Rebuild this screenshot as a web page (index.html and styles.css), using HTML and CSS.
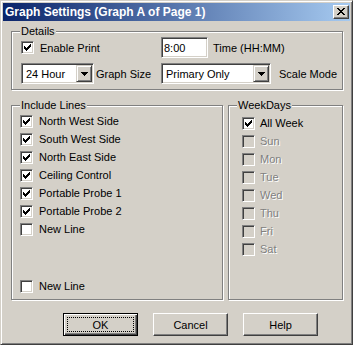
FILE: index.html
```html
<!DOCTYPE html>
<html lang="en">
<head>
  <meta charset="UTF-8" />
  <title>Graph Settings</title>
  <link rel="stylesheet" href="styles.css">
</head>
<body>

  <div class="window">
    <div class="titlebar">
      <span class="title">Graph Settings (Graph A of Page 1)</span>
      <span class="close-btn">
        <svg width="8" height="7" viewBox="0 0 8 7"><path d="M0 0h2v1h-2z M6 0h2v1h-2z M1 1h2v1h-2z M5 1h2v1h-2z M2 2h4v1h-4z M3 3h2v1h-2z M2 4h4v1h-4z M1 5h2v1h-2z M5 5h2v1h-2z M0 6h2v1h-2z M6 6h2v1h-2z" fill="#000"/></svg>
      </span>
    </div>

    <div class="dialog">
      <div class="group details">
        <span class="group-label">Details</span>
        <div class="details-row">
          <div class="details-first check">
            <span class="box"><svg width="11" height="11" viewBox="1 1 11 11"><path d="M9 3h1v1h-1z M8 4h2v1h-2z M3 5h1v1h-1z M7 5h3v1h-3z M3 6h2v1h-2z M6 6h3v1h-3z M3 7h5v1h-5z M4 8h3v1h-3z M5 9h1v1h-1z" fill="#000"/></svg></span>
            Enable Print
          </div>
          <span class="field time-field">8:00</span>
          <span>Time (HH:MM)</span>
        </div>
        <div class="details-row">
          <div class="details-first">
            <span class="field combo hours">
              <span class="combo-text">24 Hour</span>
              <span class="drop"><svg width="7" height="4" viewBox="0 0 7 4"><path d="M0 0h7v1h-1v1h-1v1h-1v1h-1v-1h-1v-1h-1v-1h-1z" fill="#000"/></svg></span>
            </span>
            <span>Graph Size</span>
          </div>
          <span class="field combo scale">
            <span class="combo-text">Primary Only</span>
            <span class="drop"><svg width="7" height="4" viewBox="0 0 7 4"><path d="M0 0h7v1h-1v1h-1v1h-1v1h-1v-1h-1v-1h-1v-1h-1z" fill="#000"/></svg></span>
          </span>
          <span class="scale-label">Scale Mode</span>
        </div>
      </div>

      <div class="groups">
        <div class="group lines">
          <span class="group-label">Include Lines</span>
          <div class="check"><span class="box"><svg width="11" height="11" viewBox="1 1 11 11"><path d="M9 3h1v1h-1z M8 4h2v1h-2z M3 5h1v1h-1z M7 5h3v1h-3z M3 6h2v1h-2z M6 6h3v1h-3z M3 7h5v1h-5z M4 8h3v1h-3z M5 9h1v1h-1z" fill="#000"/></svg></span>North West Side</div>
          <div class="check"><span class="box"><svg width="11" height="11" viewBox="1 1 11 11"><path d="M9 3h1v1h-1z M8 4h2v1h-2z M3 5h1v1h-1z M7 5h3v1h-3z M3 6h2v1h-2z M6 6h3v1h-3z M3 7h5v1h-5z M4 8h3v1h-3z M5 9h1v1h-1z" fill="#000"/></svg></span>South West Side</div>
          <div class="check"><span class="box"><svg width="11" height="11" viewBox="1 1 11 11"><path d="M9 3h1v1h-1z M8 4h2v1h-2z M3 5h1v1h-1z M7 5h3v1h-3z M3 6h2v1h-2z M6 6h3v1h-3z M3 7h5v1h-5z M4 8h3v1h-3z M5 9h1v1h-1z" fill="#000"/></svg></span>North East Side</div>
          <div class="check"><span class="box"><svg width="11" height="11" viewBox="1 1 11 11"><path d="M9 3h1v1h-1z M8 4h2v1h-2z M3 5h1v1h-1z M7 5h3v1h-3z M3 6h2v1h-2z M6 6h3v1h-3z M3 7h5v1h-5z M4 8h3v1h-3z M5 9h1v1h-1z" fill="#000"/></svg></span>Ceiling Control</div>
          <div class="check"><span class="box"><svg width="11" height="11" viewBox="1 1 11 11"><path d="M9 3h1v1h-1z M8 4h2v1h-2z M3 5h1v1h-1z M7 5h3v1h-3z M3 6h2v1h-2z M6 6h3v1h-3z M3 7h5v1h-5z M4 8h3v1h-3z M5 9h1v1h-1z" fill="#000"/></svg></span>Portable Probe 1</div>
          <div class="check"><span class="box"><svg width="11" height="11" viewBox="1 1 11 11"><path d="M9 3h1v1h-1z M8 4h2v1h-2z M3 5h1v1h-1z M7 5h3v1h-3z M3 6h2v1h-2z M6 6h3v1h-3z M3 7h5v1h-5z M4 8h3v1h-3z M5 9h1v1h-1z" fill="#000"/></svg></span>Portable Probe 2</div>
          <div class="check"><span class="box"></span>New Line</div>
          <div class="check line-last"><span class="box"></span>New Line</div>
        </div>

        <div class="group weekdays">
          <span class="group-label">WeekDays</span>
          <div class="check"><span class="box"><svg width="11" height="11" viewBox="1 1 11 11"><path d="M9 3h1v1h-1z M8 4h2v1h-2z M3 5h1v1h-1z M7 5h3v1h-3z M3 6h2v1h-2z M6 6h3v1h-3z M3 7h5v1h-5z M4 8h3v1h-3z M5 9h1v1h-1z" fill="#000"/></svg></span>All Week</div>
          <div class="check disabled"><span class="box"></span>Sun</div>
          <div class="check disabled"><span class="box"></span>Mon</div>
          <div class="check disabled"><span class="box"></span>Tue</div>
          <div class="check disabled"><span class="box"></span>Wed</div>
          <div class="check disabled"><span class="box"></span>Thu</div>
          <div class="check disabled"><span class="box"></span>Fri</div>
          <div class="check disabled"><span class="box"></span>Sat</div>
        </div>
      </div>

      <div class="buttons">
        <div class="btn btn-default"><span class="focus">OK</span></div>
        <div class="btn">Cancel</div>
        <div class="btn">Help</div>
      </div>
    </div>
  </div>

</body>
</html>
```

FILE: styles.css
```css
:root {
  --face: #d4d0c8;
  --shadow: #808080;
  --dark: #404040;
  --light: #ffffff;
}
* {
  box-sizing: border-box;
  margin: 0;
  padding: 0;
}
body {
  background: var(--face);
  font-family: 'Liberation Sans', Arial, sans-serif;
  font-size: 11px;
  color: #000;
}
.window {
  width: 353px;
  height: 345px;
  border: 1px solid;
  border-color: var(--face) var(--dark) var(--dark) var(--face);
  box-shadow: inset 1px 1px var(--light), inset -1px -1px var(--shadow);
  padding: 2px;
  background: var(--face);
  display: flex;
  flex-direction: column;
}
.titlebar {
  height: 18px;
  background: linear-gradient(to right, #0a246a, #a6caf0);
  display: flex;
  align-items: center;
  justify-content: space-between;
  padding: 0 1px 0 2px;
  color: #fff;
  font-size: 12px;
  font-weight: bold;
}
.close-btn {
  width: 16px;
  height: 14px;
  background: var(--face);
  border: 1px solid;
  border-color: var(--light) var(--dark) var(--dark) var(--light);
  box-shadow: inset -1px -1px var(--shadow);
  display: flex;
  align-items: center;
  justify-content: center;
  padding-bottom: 1px;
}
.close-btn svg, .box svg, .drop svg {
  display: block;
}
.dialog {
  padding: 10px 0 0 8px;
}

/* etched group boxes */
.group {
  position: relative;
  border: 1px solid var(--shadow);
  box-shadow: inset 1px 1px var(--light), 1px 1px var(--light);
}
.group-label {
  position: absolute;
  top: -7px;
  left: 8px;
  padding: 0 1px;
  line-height: 13px;
  background: var(--face);
}
.details {
  width: 332px;
  height: 59px;
  padding: 5px 0 0 9px;
  display: flex;
  flex-direction: column;
  gap: 5px;
}
.details-row {
  height: 21px;
  display: flex;
  align-items: center;
}
.details-first {
  width: 140px;
  display: flex;
  align-items: center;
  gap: 2px;
}

/* sunken fields */
.field {
  height: 21px;
  border: 1px solid;
  border-color: var(--shadow) var(--light) var(--light) var(--shadow);
  box-shadow: inset 1px 1px var(--dark), inset -1px -1px var(--face);
  background: #fff;
  display: flex;
  align-items: center;
}
.time-field {
  width: 47px;
  padding: 0 2px;
  margin-right: 5px;
}
.combo {
  padding: 1px;
  justify-content: space-between;
}
.combo-text {
  padding-left: 3px;
}
.hours {
  width: 73px;
}
.scale {
  width: 110px;
}
.scale-label {
  margin-left: 8px;
}
.drop {
  width: 16px;
  height: 17px;
  background: var(--face);
  border: 1px solid;
  border-color: var(--face) var(--dark) var(--dark) var(--face);
  box-shadow: inset 1px 1px var(--light), inset -1px -1px var(--shadow);
  display: flex;
  align-items: center;
  justify-content: center;
}

/* checkboxes */
.check {
  height: 18px;
  display: flex;
  align-items: center;
  gap: 6px;
}
.details-first.check {
  gap: 6px;
}
.box {
  width: 13px;
  height: 13px;
  flex-shrink: 0;
  border: 1px solid;
  border-color: var(--shadow) var(--light) var(--light) var(--shadow);
  box-shadow: inset 1px 1px var(--dark), inset -1px -1px var(--face);
  background: #fff;
}
.check.disabled {
  color: var(--shadow);
  text-shadow: 1px 1px var(--light);
}
.check.disabled .box {
  background: var(--face);
}

.groups {
  display: flex;
  gap: 5px;
  margin-top: 15px;
}
.lines {
  width: 212px;
  height: 195px;
  padding: 6px 0 4px 8px;
  display: flex;
  flex-direction: column;
}
.line-last {
  margin-top: auto;
}
.weekdays {
  width: 115px;
  height: 195px;
  padding: 8px 0 0 13px;
}
.weekdays .check {
  gap: 5px;
}

/* buttons */
.buttons {
  display: flex;
  gap: 15px;
  margin: 13px 0 0 52px;
}
.btn {
  width: 75px;
  height: 23px;
  background: var(--face);
  border: 1px solid;
  border-color: var(--light) var(--dark) var(--dark) var(--light);
  box-shadow: inset -1px -1px var(--shadow);
  display: flex;
  align-items: center;
  justify-content: center;
}
.btn-default {
  border-color: #000;
  box-shadow: inset 1px 1px var(--light), inset -1px -1px var(--dark), inset -2px -2px var(--shadow);
  align-items: stretch;
}
.focus {
  flex: 1;
  margin: 3px;
  border: 1px dotted #000;
  display: flex;
  align-items: center;
  justify-content: center;
}
```
